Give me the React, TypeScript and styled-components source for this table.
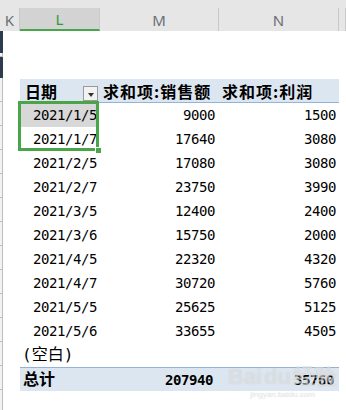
import React from "react";
import styled, { createGlobalStyle, css } from "styled-components";

const Global = createGlobalStyle`
  html, body { margin: 0; padding: 0; background: #ffffff; overflow: hidden; }
  body { width: 346px; height: 410px; }
`;

const Page = styled.div`
  position: relative;
  width: 346px;
  height: 410px;
  overflow: hidden;
  background: #fff;
`;

const ColBar = styled.div`
  display: flex;
  height: 31px;
  box-sizing: border-box;
  padding-top: 8px;
  background: #e6e6e6;
`;

const ColHead = styled.div<{ $w?: number; $active?: boolean }>`
  box-sizing: border-box;
  ${(p) => (p.$w ? css`width: ${p.$w}px;` : css`flex: 1;`)}
  border-right: 1px solid #c9c9c9;
  display: flex;
  align-items: center;
  justify-content: center;
  font-family: "Noto Sans", "Liberation Sans", sans-serif;
  font-size: 15px;
  color: #6b6f78;
  ${(p) =>
    p.$active &&
    css`
      background: #d3d3d3;
      color: #2f9a3c;
      border-bottom: 2px solid #47a64a;
    `}
`;

const Body = styled.div`
  display: flex;
  align-items: flex-start;
`;

const RowStrip = styled.div`
  width: 3px;
  display: flex;
  flex-direction: column;
`;

const RowSeg = styled.div<{ $h: number; $dark?: boolean }>`
  height: ${(p) => p.$h}px;
  box-sizing: border-box;
  background: ${(p) => (p.$dark ? "#2d3b4f" : "#f3f3f3")};
  border-right: ${(p) => (p.$dark ? "none" : "1px solid #bdbdbd")};
  border-bottom: ${(p) => (p.$dark ? "none" : "1px solid #bdbdbd")};
`;

const Table = styled.div`
  position: relative;
  margin-left: 17px;
  margin-top: 48px;
  display: grid;
  grid-template-columns: 79px 119px 121px;
  grid-auto-rows: auto;
  align-content: start;
`;

const HeadCell = styled.div<{ $first?: boolean }>`
  height: 24px;
  box-sizing: border-box;
  background: #dce6f1;
  border-bottom: 1px solid #95b3d7;
  display: flex;
  align-items: center;
  justify-content: space-between;
  padding-left: ${(p) => (p.$first ? 5 : 4)}px;
  font-family: "Noto Sans CJK SC", sans-serif;
  font-weight: 700;
  font-size: 16px;
  color: #000;
  letter-spacing: ${(p) => (p.$first ? 0 : 1)}px;
  white-space: nowrap;
`;

const FilterBtn = styled.div`
  align-self: flex-end;
  margin-right: 1px;
  margin-bottom: 1px;
  width: 15px;
  height: 15px;
  box-sizing: border-box;
  border: 1px solid #9a9a9a;
  background: #f2f2f2;
  display: flex;
  align-items: flex-end;
  justify-content: center;
  padding-bottom: 3px;
`;

const Tri = styled.div`
  width: 0;
  height: 0;
  border-left: 3.5px solid transparent;
  border-right: 3.5px solid transparent;
  border-top: 4px solid #333;
`;

const Cell = styled.div<{ $align?: "left" | "right"; $pad?: number; $bg?: string; $total?: boolean }>`
  height: 24px;
  box-sizing: border-box;
  display: flex;
  align-items: center;
  justify-content: ${(p) => (p.$align === "right" ? "flex-end" : "flex-start")};
  padding-left: ${(p) => (p.$align === "right" ? 0 : p.$pad ?? 13)}px;
  padding-right: ${(p) => (p.$align === "right" ? p.$pad ?? 3 : 0)}px;
  background: ${(p) => p.$bg ?? "transparent"};
  color: #000;
  white-space: nowrap;
  overflow: hidden;
  ${(p) =>
    p.$total &&
    css`
      background: #dce6f1;
      border-top: 1px solid #95b3d7;
      font-weight: 700;
    `}
`;

const Num = styled.span<{ $bold?: boolean }>`
  font-family: "DejaVu Sans Mono", "Liberation Mono", monospace;
  font-size: 14px;
  line-height: 16px;
  letter-spacing: -0.43px;
  font-weight: ${(p) => (p.$bold ? 700 : 400)};
`;

const Han = styled.span<{ $bold?: boolean }>`
  font-family: "DejaVu Sans Mono", "Noto Sans CJK SC", sans-serif;
  font-size: 16px;
  line-height: 20px;
  font-weight: ${(p) => (p.$bold ? 700 : 400)};
`;

const Selection = styled.div`
  position: absolute;
  left: -2px;
  top: 22px;
  width: 81px;
  height: 50px;
  box-sizing: border-box;
  border: 3px solid #4aa54a;
  pointer-events: none;
`;

const Handle = styled.div`
  position: absolute;
  left: 76px;
  top: 69px;
  width: 5px;
  height: 5px;
  background: #4aa54a;
  outline: 1px solid #fff;
`;

const Watermark = styled.div`
  position: absolute;
  left: 228px;
  top: 362px;
  display: flex;
  flex-direction: column;
  align-items: center;
  color: rgba(240, 240, 240, 0.5);
  text-shadow: 0 0 1px rgba(160, 160, 160, 0.4);
  pointer-events: none;
`;

const WmMain = styled.div`
  font-family: "Liberation Sans", sans-serif;
  font-weight: 700;
  font-size: 22px;
  display: flex;
  align-items: center;
  gap: 2px;
`;

const WmSmall = styled.div`
  font-family: "Liberation Sans", sans-serif;
  font-size: 8px;
  margin-top: -2px;
`;

const rows: [string, string, string][] = [
  ["2021/1/5", "9000", "1500"],
  ["2021/1/7", "17640", "3080"],
  ["2021/2/5", "17080", "3080"],
  ["2021/2/7", "23750", "3990"],
  ["2021/3/5", "12400", "2400"],
  ["2021/3/6", "15750", "2000"],
  ["2021/4/5", "22320", "4320"],
  ["2021/4/7", "30720", "5760"],
  ["2021/5/5", "25625", "5125"],
  ["2021/5/6", "33655", "4505"],
];

export default function App() {
  return (
    <Page>
      <Global />
      <ColBar>
        <ColHead $w={20}>K</ColHead>
        <ColHead $w={80} $active>
          L
        </ColHead>
        <ColHead $w={119}>M</ColHead>
        <ColHead $w={120}>N</ColHead>
        <ColHead />
      </ColBar>
      <Body>
        <RowStrip>
          <RowSeg $h={22} $dark />
          <RowSeg $h={4} />
          <RowSeg $h={21} $dark />
          {Array.from({ length: 14 }).map((_, i) => (
            <RowSeg key={i} $h={24} />
          ))}
        </RowStrip>
        <Table>
          <HeadCell $first>
            日期
            <FilterBtn>
              <Tri />
            </FilterBtn>
          </HeadCell>
          <HeadCell>求和项:销售额</HeadCell>
          <HeadCell>求和项:利润</HeadCell>
          {rows.map(([d, s, p], i) => (
            <React.Fragment key={d}>
              <Cell $bg={i === 0 ? "#d8d8d8" : undefined}>
                <Num>{d}</Num>
              </Cell>
              <Cell $align="right">
                <Num>{s}</Num>
              </Cell>
              <Cell $align="right">
                <Num>{p}</Num>
              </Cell>
            </React.Fragment>
          ))}
          <Cell $pad={2}>
            <Han>(空白)</Han>
          </Cell>
          <Cell />
          <Cell />
          <Cell $total $pad={3}>
            <Han $bold>总计</Han>
          </Cell>
          <Cell $total $align="right" $pad={5}>
            <Num $bold>207940</Num>
          </Cell>
          <Cell $total $align="right" $pad={5}>
            <Num $bold>35760</Num>
          </Cell>
          <Selection />
          <Handle />
        </Table>
      </Body>
      <Watermark>
        <WmMain>
          <span>Bai</span>
          <span>du</span>
          <span>经验</span>
        </WmMain>
        <WmSmall>jingyan.baidu.com</WmSmall>
      </Watermark>
    </Page>
  );
}
